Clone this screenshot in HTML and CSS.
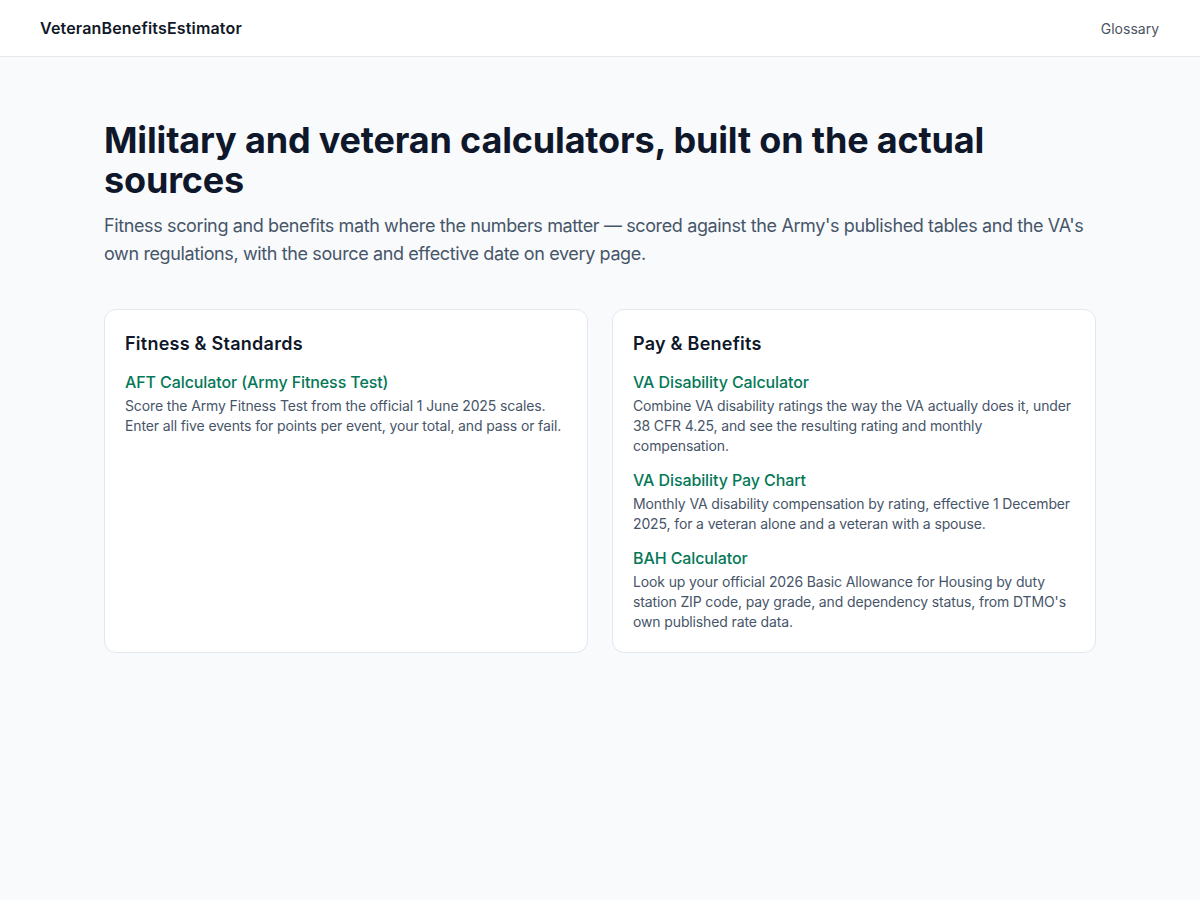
FILE: index.html
```html
<!DOCTYPE html>
<html lang="en">
<head>
<meta charset="utf-8">
<title>VeteranBenefitsEstimator</title>
<link rel="stylesheet" href="styles.css">
</head>
<body>
<header class="site-header">
  <a class="logo" href="#">VeteranBenefitsEstimator</a>
  <nav class="nav"><a href="#">Glossary</a></nav>
</header>
<main class="main">
  <h1 class="title">Military and veteran calculators, built on the actual sources</h1>
  <p class="lead">Fitness scoring and benefits math where the numbers matter — scored against the Army's published tables and the VA's own regulations, with the source and effective date on every page.</p>
  <div class="grid">
    <section class="card">
      <h2 class="card-title">Fitness &amp; Standards</h2>
      <ul class="items">
        <li class="item">
          <a class="item-link" href="#">AFT Calculator (Army Fitness Test)</a>
          <p class="item-desc">Score the Army Fitness Test from the official 1 June 2025 scales. Enter all five events for points per event, your total, and pass or fail.</p>
        </li>
      </ul>
    </section>
    <section class="card">
      <h2 class="card-title">Pay &amp; Benefits</h2>
      <ul class="items">
        <li class="item">
          <a class="item-link" href="#">VA Disability Calculator</a>
          <p class="item-desc">Combine VA disability ratings the way the VA actually does it, under 38 CFR 4.25, and see the resulting rating and monthly compensation.</p>
        </li>
        <li class="item">
          <a class="item-link" href="#">VA Disability Pay Chart</a>
          <p class="item-desc">Monthly VA disability compensation by rating, effective 1 December 2025, for a veteran alone and a veteran with a spouse.</p>
        </li>
        <li class="item">
          <a class="item-link" href="#">BAH Calculator</a>
          <p class="item-desc">Look up your official 2026 Basic Allowance for Housing by duty station ZIP code, pay grade, and dependency status, from DTMO's own published rate data.</p>
        </li>
      </ul>
    </section>
  </div>
</main>
</body>
</html>
```

FILE: styles.css
```css
* { box-sizing: border-box; }
html, body { margin: 0; padding: 0; }
body {
  background: #f8fafc;
  font-family: Inter, "Noto Sans", sans-serif;
  color: #0f172a;
  min-height: 900px;
}
a { text-decoration: none; }
.site-header {
  height: 57px;
  background: #fff;
  border-bottom: 1px solid #e5e7eb;
  display: flex;
  align-items: center;
  justify-content: space-between;
  padding: 0 41px 0 40px;
}
.logo {
  font-size: 16px;
  font-weight: 600;
  color: #111827;
  letter-spacing: 0.17px;
}
.nav a {
  font-size: 14px;
  color: #4b5563;
}
.main {
  max-width: 1024px;
  margin: 0 auto;
  padding: 63px 16px 40px;
}
.title {
  margin: 0;
  font-size: 36px;
  line-height: 40px;
  font-weight: 700;
  letter-spacing: -0.17px;
  color: #0f172a;
}
.lead {
  margin: 12px 0 0;
  font-size: 18px;
  line-height: 28px;
  letter-spacing: -0.38px;
  color: #475569;
}
.grid {
  margin-top: 41px;
  display: grid;
  grid-template-columns: 1fr 1fr;
  gap: 24px;
}
.card {
  background: #fff;
  border: 1px solid #e2e8f0;
  border-radius: 12px;
  padding: 20px;
}
.card-title {
  margin: 0;
  font-size: 18px;
  line-height: 28px;
  font-weight: 600;
  letter-spacing: 0.25px;
  color: #0f172a;
}
.items {
  list-style: none;
  margin: 12px 0 0;
  padding: 0;
  display: flex;
  flex-direction: column;
  gap: 12px;
}
.item-link {
  display: block;
  font-size: 16px;
  line-height: 24px;
  font-weight: 500;
  letter-spacing: -0.1px;
  color: #047857;
}
.item-desc {
  margin: 2px 0 0;
  font-size: 14px;
  line-height: 20px;
  letter-spacing: -0.13px;
  color: #475569;
}
```
